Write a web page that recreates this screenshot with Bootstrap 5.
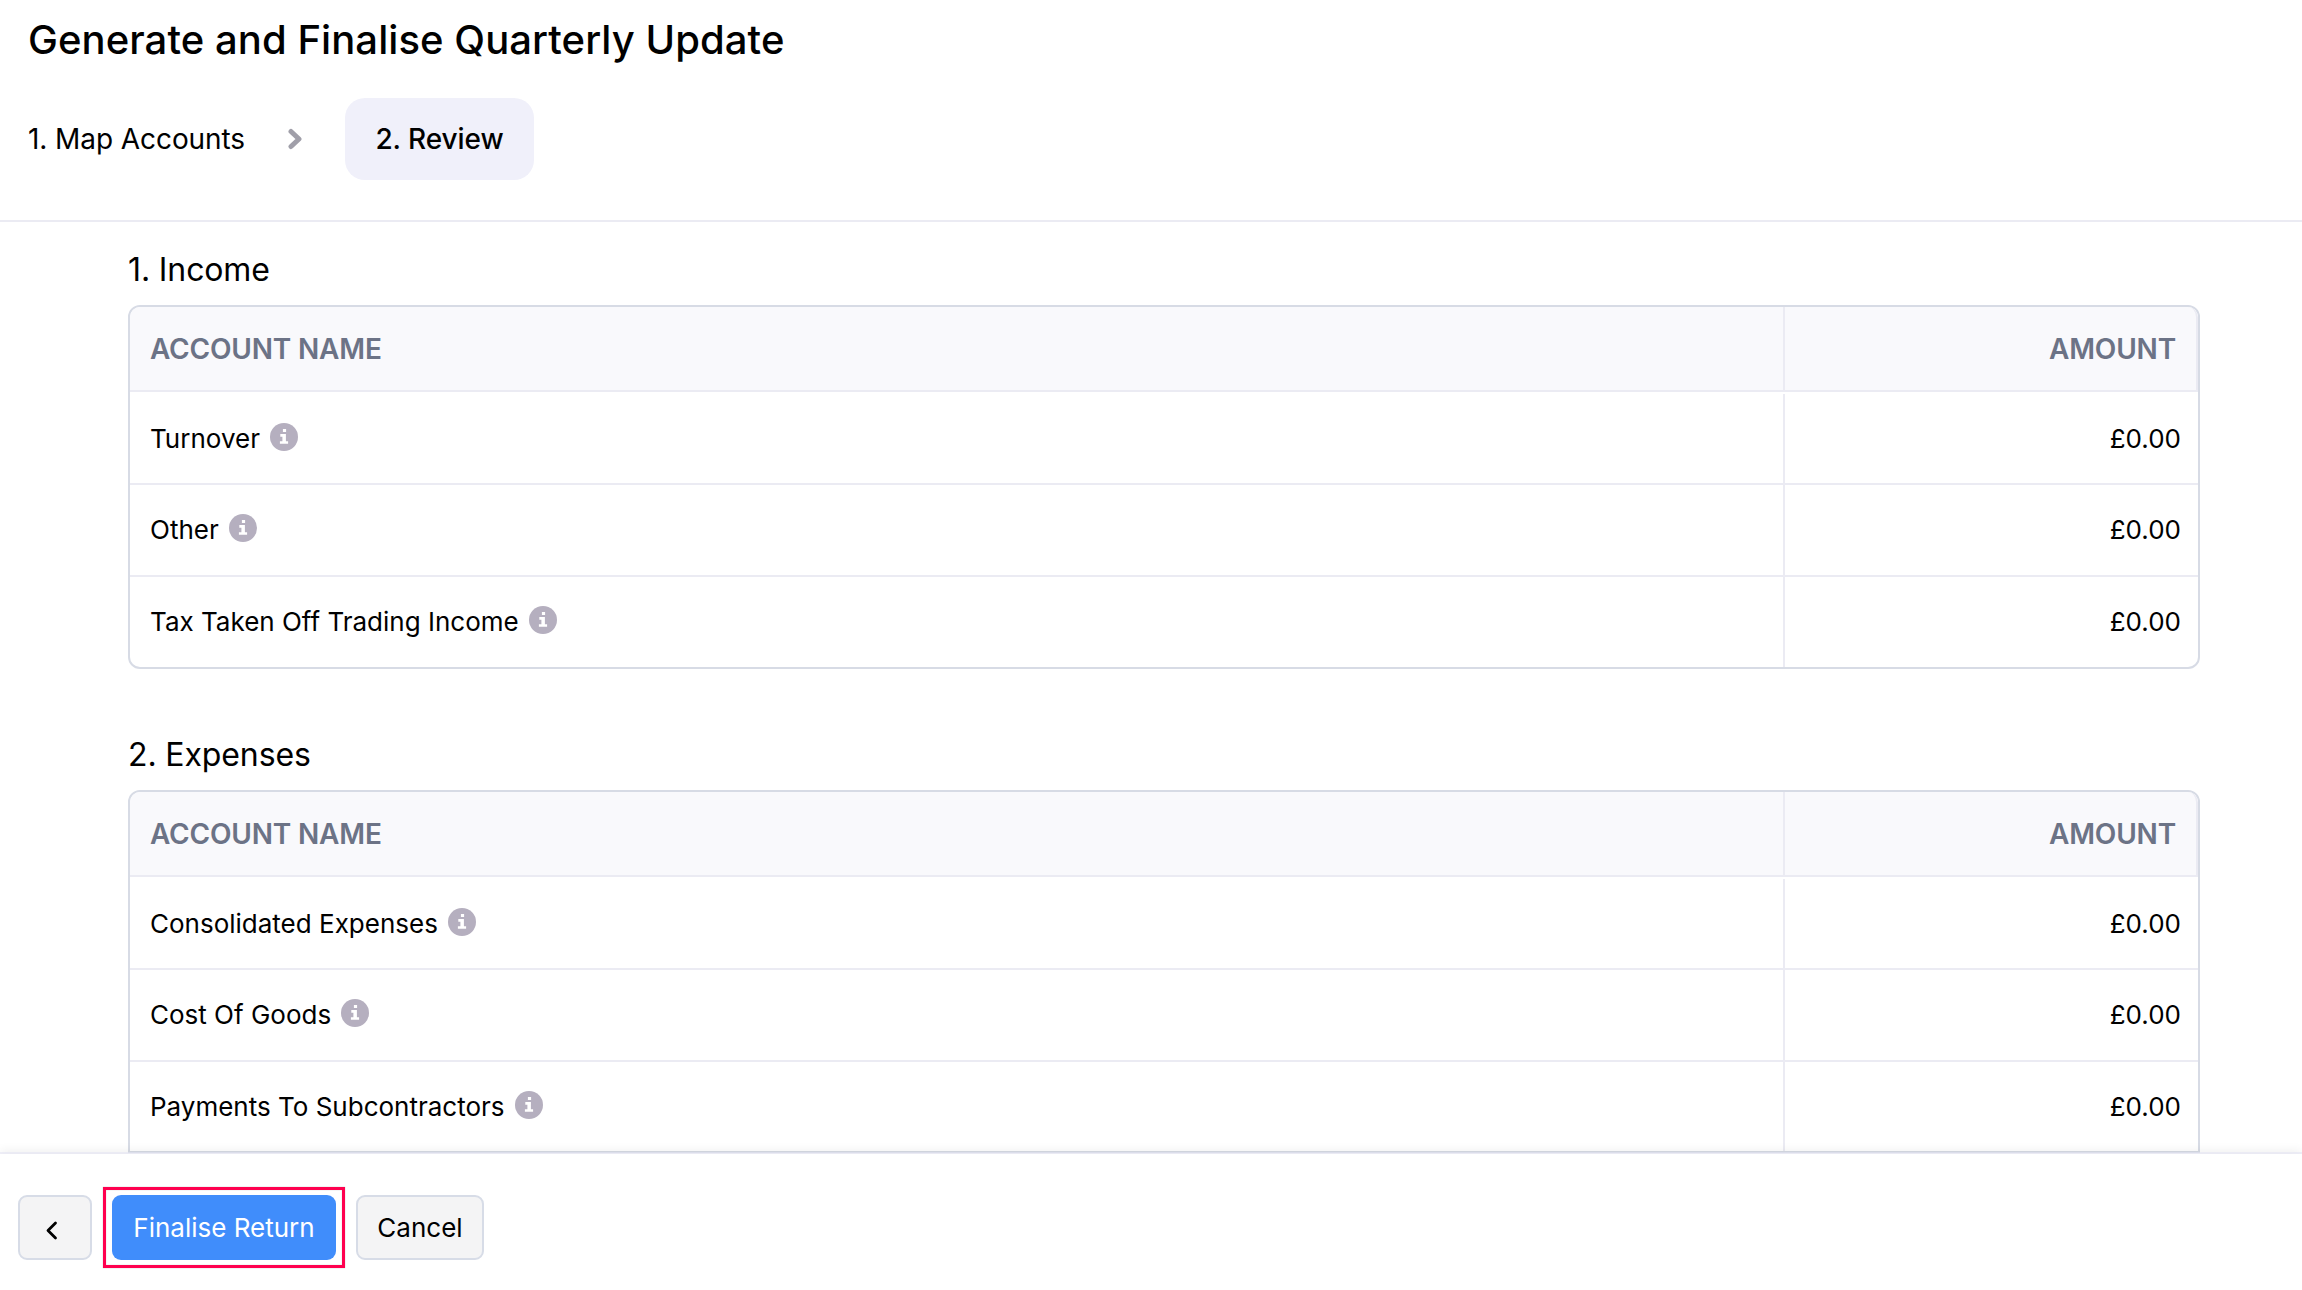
<!DOCTYPE html>
<html lang="en">
<head>
<meta charset="utf-8">
<meta name="viewport" content="width=device-width, initial-scale=1">
<title>Generate and Finalise Quarterly Update</title>
<link href="https://cdn.jsdelivr.net/npm/bootstrap@5.3.0/dist/css/bootstrap.min.css" rel="stylesheet">
<style>
  body { font-family: Inter, "Liberation Sans", sans-serif; font-size: 26px; line-height: 32px; color: #000; background: #fff; }
  .page-top { height: 222px; padding: 16px 28px 0; border-bottom: 2px solid #ebebf3; }
  .page-title { font-size: 40px; line-height: 48px; font-weight: 500; letter-spacing: .07px; margin-bottom: 34px; }
  .steps { height: 82px; font-size: 28px; }
  .step-label { letter-spacing: -.08px; padding-bottom: 1px; }
  .step-arrow { width: 14px; height: 22px; margin: 0 43px; }
  .step-current { width: 189px; background: #f0f0fa; border-radius: 20px; font-weight: 500; letter-spacing: -.08px; padding-bottom: 1px; }
  .page-body { min-height: 0; padding: 28px 102px 0 128px; }
  .section-title { font-size: 32px; line-height: 40px; font-weight: 400; letter-spacing: -.12px; margin-bottom: 15px; }
  .section-gap { margin-bottom: 66px; }
  .ledger { border: 2px solid #d7dbe5; border-radius: 12px; overflow: hidden; }
  .ledger-line { border-bottom: 2px solid #ebebf3; height: 92px; }
  .ledger-head { height: 85px; background: #f9f9fc; color: #6c7386; font-size: 28px; font-weight: 600; letter-spacing: -.18px; }
  .ledger-head + .ledger-line { height: 91px; margin-top: 2px; }
  .ledger-line:last-child { border-bottom: 0; height: 90px; }
  .ledger-short { border-bottom-left-radius: 0; border-bottom-right-radius: 0; }
  .ledger-short .ledger-line:last-child { height: 89px; }
  .cell-name { padding-left: 20px; }
  .cell-amount { width: 415px; border-left: 2px solid #ebebf3; padding-right: 17px; }
  .ledger-head .cell-amount { border-right: 2px solid #ebebf3; padding-right: 20px; border-top-right-radius: 10px; }
  .info { width: 28px; height: 28px; margin: 0 0 4px 10px; }
  .page-foot { height: 136px; padding: 33px 18px 0; background: #fff; box-shadow: 0 -2px 0 rgba(228,228,244,.6), 0 -3px 10px rgba(0,0,0,.07); z-index: 1; }
  .foot-row { height: 81px; gap: 11px; }
  .foot-row .btn { height: 65px; font-size: 26px; line-height: 32px; border-radius: 9px; padding: 0; }
  .btn-plain { background: #f4f4f5; border: 2px solid #d7dce7; color: #000; }
  .btn-back { width: 74px; }
  .btn-cancel { width: 128px; }
  .btn-finalise { width: 224px; background: #408dfb; border: 0; color: #fff; }
  .call-out { border: 3px solid #ff004f; padding: 5px 6px; box-shadow: 0 0 1px rgba(0,0,0,.3), inset 0 0 1px rgba(0,0,0,.4); }
</style>
</head>
<body>
<svg class="d-none" xmlns="http://www.w3.org/2000/svg">
  <symbol id="info" viewBox="0 0 28 28">
    <circle cx="14" cy="14" r="14" fill="#b5afbf"/>
    <path fill="#fff" d="M12.9 6.1h3.2v3h-3.2zM10.3 11.1h5.6v7.1h2.2v2.6H9.9v-2.6h2.5v-4.5h-2.1z"/>
  </symbol>
</svg>
<div class="d-flex flex-column vh-100 overflow-hidden">
  <header class="page-top flex-shrink-0">
    <h1 class="page-title">Generate and Finalise Quarterly Update</h1>
    <nav class="steps d-flex align-items-center">
      <span class="step-label">1. Map Accounts</span>
      <svg class="step-arrow" viewBox="0 0 14 22"><path d="M3 3.5l8 7.5-8 7.5" fill="none" stroke="#a09fa9" stroke-width="5" stroke-linecap="round" stroke-linejoin="round"/></svg>
      <span class="step-current h-100 d-flex align-items-center justify-content-center">2. Review</span>
    </nav>
  </header>

  <main class="page-body flex-grow-1 overflow-hidden">
    <section class="section-gap">
      <h2 class="section-title">1. Income</h2>
      <div class="ledger">
        <div class="ledger-head ledger-line d-flex align-items-stretch">
          <div class="cell-name flex-grow-1 d-flex align-items-center">ACCOUNT NAME</div>
          <div class="cell-amount d-flex align-items-center justify-content-end">AMOUNT</div>
        </div>
        <div class="ledger-line d-flex">
          <div class="cell-name flex-grow-1 d-flex align-items-center">Turnover<svg class="info"><use href="#info"/></svg></div>
          <div class="cell-amount d-flex align-items-center justify-content-end">£0.00</div>
        </div>
        <div class="ledger-line d-flex">
          <div class="cell-name flex-grow-1 d-flex align-items-center">Other<svg class="info"><use href="#info"/></svg></div>
          <div class="cell-amount d-flex align-items-center justify-content-end">£0.00</div>
        </div>
        <div class="ledger-line d-flex">
          <div class="cell-name flex-grow-1 d-flex align-items-center">Tax Taken Off Trading Income<svg class="info"><use href="#info"/></svg></div>
          <div class="cell-amount d-flex align-items-center justify-content-end">£0.00</div>
        </div>
      </div>
    </section>

    <section>
      <h2 class="section-title">2. Expenses</h2>
      <div class="ledger ledger-short">
        <div class="ledger-head ledger-line d-flex align-items-stretch">
          <div class="cell-name flex-grow-1 d-flex align-items-center">ACCOUNT NAME</div>
          <div class="cell-amount d-flex align-items-center justify-content-end">AMOUNT</div>
        </div>
        <div class="ledger-line d-flex">
          <div class="cell-name flex-grow-1 d-flex align-items-center">Consolidated Expenses<svg class="info"><use href="#info"/></svg></div>
          <div class="cell-amount d-flex align-items-center justify-content-end">£0.00</div>
        </div>
        <div class="ledger-line d-flex">
          <div class="cell-name flex-grow-1 d-flex align-items-center">Cost Of Goods<svg class="info"><use href="#info"/></svg></div>
          <div class="cell-amount d-flex align-items-center justify-content-end">£0.00</div>
        </div>
        <div class="ledger-line d-flex">
          <div class="cell-name flex-grow-1 d-flex align-items-center">Payments To Subcontractors<svg class="info"><use href="#info"/></svg></div>
          <div class="cell-amount d-flex align-items-center justify-content-end">£0.00</div>
        </div>
      </div>
    </section>
  </main>

  <footer class="page-foot position-relative flex-shrink-0">
    <div class="foot-row d-flex align-items-center">
      <button type="button" class="btn btn-plain btn-back d-flex align-items-center justify-content-center" aria-label="Back">
        <svg width="30" height="30" viewBox="0 0 30 30"><path d="M15.5 10l-7.5 7.5 7.5 7.5" fill="none" stroke="#000" stroke-width="2.8" stroke-linecap="round" stroke-linejoin="round"/></svg>
      </button>
      <div class="call-out"><button type="button" class="btn btn-primary btn-finalise d-block">Finalise Return</button></div>
      <button type="button" class="btn btn-plain btn-cancel">Cancel</button>
    </div>
  </footer>
</div>
<script src="https://cdn.jsdelivr.net/npm/bootstrap@5.3.0/dist/js/bootstrap.bundle.min.js"></script>
</body>
</html>
